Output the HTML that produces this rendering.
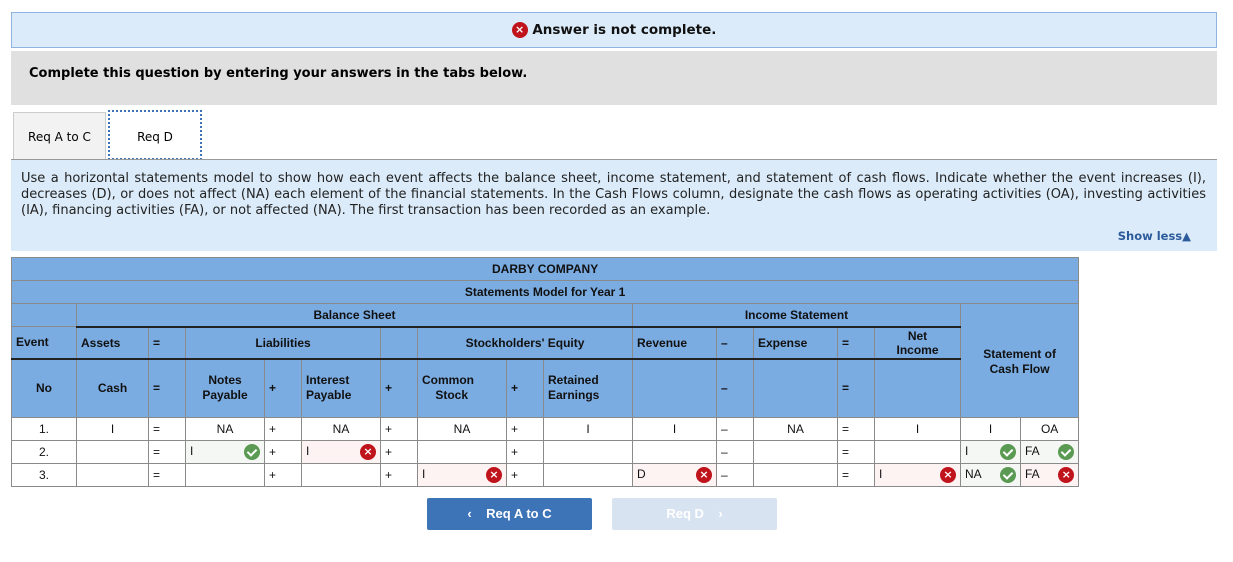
<!DOCTYPE html>
<html><head><meta charset="utf-8"><style>
body{margin:0;width:1233px;height:562px;background:#fff;position:relative;font-family:"DejaVu Sans","Liberation Sans",sans-serif;overflow:hidden}
.abs{position:absolute}
.ban{left:11px;top:12px;width:1204px;height:34px;background:#dbebf9;border:1px solid #8fb3de;text-align:center;line-height:34px;font-weight:bold;font-size:13.5px;color:#111}
.x{display:inline-block;width:16px;height:16px;border-radius:50%;background:#c0141c;color:#fff;font-size:11px;line-height:16px;text-align:center;font-weight:bold;font-family:"DejaVu Sans",sans-serif;vertical-align:middle}
.ok{display:inline-block;width:16px;height:16px;border-radius:50%;background:#5b9a52;vertical-align:middle;position:relative}
.ok:after{content:"";position:absolute;left:5px;top:3px;width:4px;height:7px;border:solid #fff;border-width:0 2px 2px 0;transform:rotate(45deg)}
.gray{left:11px;top:51px;width:1206px;height:54px;background:#e0e0e0;font-weight:bold;font-size:13px;line-height:46px;padding-left:18px;box-sizing:border-box}
.tab1{left:13px;top:112px;width:93px;height:47px;background:#f2f2f2;border:1px solid #ccc;border-bottom:none;font-size:12px;text-align:center;line-height:48px;box-sizing:border-box}
.tab2{left:108px;top:110px;width:94px;height:50px;background:#fff;border:1px dotted #3c73b8;border-width:2px;font-size:12px;text-align:center;line-height:50px;box-sizing:border-box}
.info{left:11px;top:159px;width:1206px;height:92px;background:#dbebf9;border-top:1px solid #999;box-sizing:border-box;font-size:13px;line-height:16px;color:#222;padding:11px 10px;white-space:nowrap}
.info .j{width:1185px;text-align:justify;text-align-last:justify;white-space:normal}
.show{position:absolute;right:26px;top:68px;font-weight:bold;color:#2c5b9b;font-size:11.5px}
table{position:absolute;left:11px;top:257px;border-collapse:collapse;table-layout:fixed;width:1067px;font-family:"Liberation Sans",Arial,sans-serif;font-size:12px;color:#111}
td{border:1px solid #8a8a8a;padding:0 4px;overflow:hidden;white-space:nowrap}
thead td{background:#7aabe1;font-weight:bold}
.c{text-align:center}
.h23{height:22px}
tbody td{height:22px;background:#fff}
.g{background:#f4f7f3!important}
.r{background:#fdf3f3!important}
.ic{float:right;margin-top:0px}
.dk{border-bottom:2px solid #222}
.btn{top:498px;height:32px;width:165px;border-radius:2px;font-family:"Liberation Sans",Arial,sans-serif;font-weight:bold;font-size:13px;color:#fff;text-align:center;line-height:32px}
</style></head><body>
<div class="abs ban"><span class="x">×</span> Answer is not complete.</div>
<div class="abs gray">Complete this question by entering your answers in the tabs below.</div>
<div class="abs tab1">Req A to C</div>
<div class="abs tab2">Req D</div>
<div class="abs info"><div class="j">Use a horizontal statements model to show how each event affects the balance sheet, income statement, and statement of cash flows. Indicate whether the event increases (I),</div><div class="j">decreases (D), or does not affect (NA) each element of the financial statements. In the Cash Flows column, designate the cash flows as operating activities (OA), investing activities</div><div>(IA), financing activities (FA), or not affected (NA). The first transaction has been recorded as an example.</div><div class="show">Show less▲</div></div>
<table>
<colgroup><col style="width:65px"><col style="width:72px"><col style="width:37px"><col style="width:79px"><col style="width:37px"><col style="width:79px"><col style="width:37px"><col style="width:89px"><col style="width:37px"><col style="width:89px"><col style="width:84px"><col style="width:37px"><col style="width:84px"><col style="width:37px"><col style="width:86px"><col style="width:60px"><col style="width:58px"></colgroup>
<thead>
<tr><td colspan="17" class="c h23">DARBY COMPANY</td></tr>
<tr><td colspan="17" class="c h23">Statements Model for Year 1</td></tr>
<tr><td class="h23"></td><td colspan="9" class="c dk">Balance Sheet</td><td colspan="5" class="c dk">Income Statement</td><td colspan="2" rowspan="3" class="c" style="line-height:15px;padding-top:2px">Statement of<br>Cash Flow</td></tr>
<tr style="height:32px"><td class="dk">Event</td><td class="dk">Assets</td><td class="dk">=</td><td colspan="3" class="c dk">Liabilities</td><td class="dk"></td><td colspan="3" class="c dk">Stockholders' Equity</td><td class="dk">Revenue</td><td class="dk">–</td><td class="dk">Expense</td><td class="dk">=</td><td class="c dk" style="line-height:14px">Net<br>Income</td></tr>
<tr style="height:59px;line-height:15px"><td class="c">No</td><td class="c">Cash</td><td>=</td><td class="c">Notes<br>Payable</td><td>+</td><td>Interest<br>Payable</td><td>+</td><td>Common<br>&nbsp;&nbsp;&nbsp;&nbsp;Stock</td><td>+</td><td>Retained<br>Earnings</td><td></td><td>–</td><td></td><td>=</td><td></td></tr>
</thead>
<tbody>
<tr><td class="c">1.</td><td class="c">I</td><td>=</td><td class="c">NA</td><td>+</td><td class="c">NA</td><td>+</td><td class="c">NA</td><td>+</td><td class="c">I</td><td class="c">I</td><td>–</td><td class="c">NA</td><td>=</td><td class="c">I</td><td class="c">I</td><td class="c">OA</td></tr>
<tr><td class="c">2.</td><td></td><td>=</td><td class="g">I<span class="ok ic"></span></td><td>+</td><td class="r">I<span class="x ic">×</span></td><td>+</td><td></td><td>+</td><td></td><td></td><td>–</td><td></td><td>=</td><td></td><td class="g">I<span class="ok ic"></span></td><td class="g">FA<span class="ok ic"></span></td></tr>
<tr><td class="c">3.</td><td></td><td>=</td><td></td><td>+</td><td></td><td>+</td><td class="r">I<span class="x ic">×</span></td><td>+</td><td></td><td class="r">D<span class="x ic">×</span></td><td>–</td><td></td><td>=</td><td class="r">I<span class="x ic">×</span></td><td class="g">NA<span class="ok ic"></span></td><td class="r">FA<span class="x ic">×</span></td></tr>
</tbody></table>
<div class="abs btn" style="left:427px;background:#3d74b8">‹&nbsp;&nbsp;&nbsp; Req A to C</div>
<div class="abs btn" style="left:612px;background:#d8e3f1">Req D &nbsp;&nbsp;&nbsp;›</div>
</body></html>
